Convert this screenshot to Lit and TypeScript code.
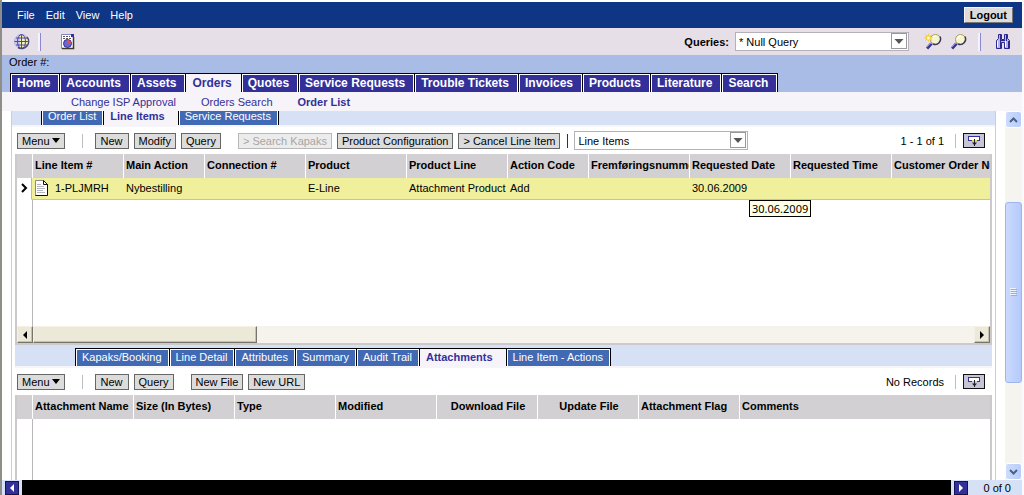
import { LitElement, html, css, svg, nothing } from "lit";
import { customElement, property } from "lit/decorators.js";
import { classMap } from "lit/directives/class-map.js";
import { styleMap } from "lit/directives/style-map.js";

interface Column {
  label: string;
  width?: number;
  center?: boolean;
}

const base = css`
  * {
    box-sizing: border-box;
  }
  button,
  select {
    font: inherit;
    color: inherit;
    margin: 0;
  }
  svg {
    display: block;
    flex: none;
  }
`;

@customElement("tab-strip")
class TabStrip extends LitElement {
  @property({ attribute: false }) tabs: string[] = [];
  @property() active = "";
  @property({ reflect: true }) size = "small";

  static styles = [
    base,
    css`
      :host {
        display: flex;
        align-items: flex-end;
      }
      .strip {
        display: flex;
        flex: none;
        border-right: 1px solid #000;
      }
      .tab {
        display: block;
        height: 18px;
        padding: 0 7px 0 6px;
        border-top: 1px solid #000;
        border-left: 1px solid #000;
        box-shadow: inset 1px 1px #fff, inset -1px 0 #fff;
        background: #4169b4;
        color: #fff;
        line-height: 17px;
        text-decoration: none;
        white-space: nowrap;
      }
      .active {
        padding-right: 13px;
        background: #f6f3f9;
        color: #33309a;
        font-weight: bold;
        box-shadow: none;
      }
      :host([size="large"]) .tab {
        height: 19px;
        padding-right: 9px;
        background: #33309a;
        font-size: 12px;
        font-weight: bold;
        line-height: 19px;
      }
      :host([size="large"]) .active {
        background: #f6f3f9;
      }
    `,
  ];

  render() {
    return html`<nav class="strip">
      ${this.tabs.map(
        (t) => html`<a href="#" class=${classMap({ tab: true, active: t === this.active })}>${t}</a>`
      )}
    </nav>`;
  }
}

@customElement("combo-box")
class ComboBox extends LitElement {
  @property() value = "";
  @property() label = "";
  @property({ type: Boolean }) caption = false;

  static styles = [
    base,
    css`
      :host {
        display: block;
      }
      .label {
        display: flex;
        align-items: center;
        gap: 6px;
        font-weight: bold;
      }
      .field {
        display: grid;
        width: 174px;
        height: 19px;
        border: 1px solid #b4b2b8;
        background: #fff;
        font-weight: normal;
      }
      .field > * {
        grid-area: 1 / 1;
      }
      .select {
        appearance: none;
        width: 100%;
        border: 0;
        padding: 0 20px 0 3px;
        background: none;
        outline-offset: -1px;
      }
      .arrow {
        justify-self: end;
        pointer-events: none;
      }
    `,
  ];

  render() {
    return html`<label class="label">
      ${this.caption ? html`<span>${this.label}</span>` : nothing}
      <span class="field">
        <select class="select" aria-label=${this.label}>
          <option>${this.value}</option>
        </select>
        <svg class="arrow" width="17" height="17" viewBox="0 0 17 17">
          <rect x=".5" y=".5" width="15" height="15" fill="#fff" stroke="#9a989c" />
          <path d="M3.500 6h9l-4.500 5z" fill="#555" />
        </svg>
      </span>
    </label>`;
  }
}

@customElement("applet-toolbar")
class AppletToolbar extends LitElement {
  @property({ attribute: false }) groups: string[][] = [];
  @property({ attribute: false }) disabled: string[] = [];
  @property() view = "";
  @property() status = "";

  static styles = [
    base,
    css`
      :host {
        display: flex;
        align-items: center;
        height: 27px;
        padding: 0 7px 0 2px;
      }
      .group {
        display: flex;
        gap: 5px;
        margin-right: 17px;
      }
      .button {
        display: flex;
        align-items: center;
        justify-content: center;
        gap: 2px;
        min-width: 34px;
        height: 16px;
        padding: 0 4px;
        border: 1px solid #666;
        background: #dcdcdc;
        line-height: 14px;
        white-space: nowrap;
      }
      .button:disabled {
        border-color: #b8b8b8;
        background: #ececec;
        color: #a6a6a6;
      }
      .rule {
        width: 1px;
        height: 14px;
        background: #bdbdc4;
      }
      .menu-rule {
        margin: 0 12px 0 17px;
      }
      .view-rule {
        background: #2b2870;
        margin-right: 6px;
        margin-left: -10px;
      }
      .status {
        margin-left: auto;
        white-space: nowrap;
      }
      .status-rule {
        margin: 0 7px 0 11px;
      }
      .toggle {
        padding: 0;
        border: 0;
        background: none;
      }
    `,
  ];

  render() {
    return html`
      <button class="button">
        Menu
        <svg width="8" height="5" viewBox="0 0 8 5"><path d="M0 0h8L4 5z" /></svg>
      </button>
      <span class="rule menu-rule"></span>
      ${this.groups.map(
        (g) => html`<div class="group">
          ${g.map(
            (b) => html`<button class="button" ?disabled=${this.disabled.includes(b)}>${b}</button>`
          )}
        </div>`
      )}
      ${this.view
        ? html`<span class="rule view-rule"></span>
            <combo-box label="View" value=${this.view}></combo-box>`
        : nothing}
      <span class="status">${this.status}</span>
      <span class="rule status-rule"></span>
      <button class="toggle" aria-label="Show more">
        <svg width="22" height="15" viewBox="0 0 22 15">
          <rect x=".5" y=".5" width="21" height="14" fill="#c6c5d8" stroke="#111" />
          <rect x="5.500" y="3.500" width="11" height="4" fill="#fff" stroke="#33309a" />
          <path d="M9 7.500h5" stroke="#e8d860" />
          <path d="M11.500 6v7" stroke="#222" />
          <path d="M9 9.500h5l-2.500 3z" fill="#222" />
        </svg>
      </button>
    `;
  }
}

@customElement("record-list")
class RecordList extends LitElement {
  @property({ attribute: false }) columns: Column[] = [];
  @property({ attribute: false }) rows: string[][] = [];
  @property({ type: Boolean }) scroller = false;

  static styles = [
    base,
    css`
      :host {
        display: flex;
        flex-direction: column;
        border: solid #cbc9cc;
        border-width: 0 2px 0 2px;
        background: linear-gradient(#b9b7ba, #b9b7ba) 15px 0 / 1px 100% no-repeat #fff;
      }
      :host([scroller]) {
        border-bottom-width: 2px;
      }
      .table {
        width: 100%;
        table-layout: fixed;
        border-collapse: separate;
        border-spacing: 0;
      }
      .head,
      .cell {
        overflow: hidden;
        white-space: nowrap;
        text-align: left;
      }
      .head {
        height: 24px;
        padding: 0 0 2px 2px;
        border-left: 1px solid #fff;
        background: #d2d0d2;
        font-weight: bold;
      }
      .head:first-child {
        border-left: 0;
      }
      .center {
        text-align: center;
      }
      .cell {
        height: 22px;
        padding: 0 0 2px 3px;
        border-bottom: 1px solid #c4c2a8;
        background: #efef9c;
      }
      .marker {
        background: #fff;
        border-bottom-color: #fff;
        border-right: 1px solid #b9b7ba;
      }
      .link {
        display: flex;
        align-items: center;
        gap: 7px;
      }
      .space {
        flex: 1;
      }
      .scrollbar {
        display: flex;
        height: 17px;
        background: #f5f3ec;
      }
      .step,
      .thumb {
        border: 1px solid;
        border-color: #f4f1e4 #77746a #77746a #f4f1e4;
        background: #ece9d8;
        box-shadow: inset -1px -1px #c4c1b0;
      }
      .step {
        display: grid;
        place-content: center;
        width: 16px;
        padding: 0;
      }
      .thumb {
        width: 23%;
      }
      .end {
        margin-left: auto;
      }
    `,
  ];

  render() {
    return html`
      <table class="table">
        <colgroup>
          <col style=${styleMap({ width: "15px" })} />
          ${this.columns.map(
            (c) => html`<col style=${styleMap(c.width ? { width: `${c.width}px` } : {})} />`
          )}
        </colgroup>
        <thead>
          <tr>
            <th class="head"></th>
            ${this.columns.map(
              (c) => html`<th class=${classMap({ head: true, center: !!c.center })}>${c.label}</th>`
            )}
          </tr>
        </thead>
        <tbody>
          ${this.rows.map(
            (r) => html`<tr>
              <td class="cell marker">
                <svg width="9" height="10" viewBox="0 0 9 10">
                  <path d="M2 1l4 4-4 4" fill="none" stroke="#000" stroke-width="2" />
                </svg>
              </td>
              ${r.map((v, i) =>
                i === 0
                  ? html`<td class="cell">
                      <span class="link">
                        <svg width="13" height="16" viewBox="0 0 13 16">
                          <path d="M.5.5h8l4 4v11H.5z" fill="#fff" stroke="#888" />
                          <path d="M12.500 4.500v11H.5M8.500.5v4h4z" fill="none" stroke="#111" />
                          <path d="M2 4.500h4M2 6.500h7M2 8.500h8M2 10.500h6M2 12.500h8" stroke="#b5b5c0" />
                        </svg>
                        ${v}
                      </span>
                    </td>`
                  : html`<td class="cell">${v}</td>`
              )}
            </tr>`
          )}
        </tbody>
      </table>
      <div class="space"></div>
      ${this.scroller
        ? html`<div class="scrollbar">
            <button class="step" aria-label="Scroll left">
              <svg width="4" height="8" viewBox="0 0 4 8"><path d="M4 0v8L0 4z" /></svg>
            </button>
            <div class="thumb"></div>
            <button class="step end" aria-label="Scroll right">
              <svg width="4" height="8" viewBox="0 0 4 8"><path d="M0 0v8l4-4z" /></svg>
            </button>
          </div>`
        : nothing}
    `;
  }
}

const lens = svg`
  <path d="M6.500 10.500L2 15.500" stroke="#37348f" stroke-width="3" />
  <path d="M6 10L1.500 14.500" stroke="#8f8de0" />
  <circle cx="10.500" cy="6.500" r="5" fill="#f6f4cc" stroke="#a8a05c" />
  <path d="M15 3.500a5.500 5.500 0 0 1-7 7.500" fill="none" stroke="#3a3a58" stroke-width="1.500" />
  <path d="M7.500 6a3.500 3.500 0 0 1 3-3" fill="none" stroke="#fff" stroke-width="1.500" />`;

@customElement("app-root")
class AppRoot extends LitElement {
  static styles = [
    base,
    css`
      :host {
        display: flex;
        flex-direction: column;
        min-height: 100vh;
        box-sizing: border-box;
        padding-top: 2px;
        border-left: 2px solid #8f8d88;
        border-right: 2px solid #fbfaff;
        background: #fff;
        color: #000;
        font-family: "Liberation Sans", Arial, sans-serif;
        font-size: 11px;
        line-height: 14px;
      }
      .menubar {
        display: flex;
        align-items: center;
        gap: 1px;
        height: 26px;
        padding: 0 9px 0 10px;
        background: #0f3585;
      }
      .menu {
        padding: 0 5px;
        border: 0;
        background: none;
        color: #fff;
        height: 26px;
      }
      .logout {
        margin-left: auto;
        height: 16px;
        padding: 0 5px;
        border: 1px solid #f6f6f6;
        border-right-color: #777;
        border-bottom-color: #777;
        background: #dcdcdc;
        color: #000;
        font-weight: bold;
        line-height: 14px;
      }
      .toolbar {
        display: flex;
        align-items: center;
        height: 27px;
        padding: 0 11px 0 11px;
        background: #e6dfe8;
      }
      .icon {
        padding: 0;
        border: 0;
        background: none;
      }
      .bar {
        width: 3px;
        height: 18px;
        border: solid #8a88d0;
        border-width: 0 1px 0 0;
        background: #f6f4fb;
      }
      .bar-left {
        margin: 0 20px 0 8px;
      }
      .queries {
        margin: 0 14px 0 auto;
      }
      .find {
        margin-left: 8px;
      }
      .bar-right {
        margin: 0 14px 0 10px;
      }
      .context {
        padding: 0 7px;
        background: #a9bce6;
      }
      .order {
        height: 18px;
      }
      .screens {
        margin-left: 1px;
      }
      .views {
        display: flex;
        gap: 25px;
        align-items: center;
        height: 19px;
        padding-left: 69px;
        background: #f6f3f9;
      }
      .view {
        color: #33309a;
        text-decoration: none;
      }
      .current {
        font-weight: bold;
      }
      .frame {
        display: flex;
        flex: 1;
      }
      .content {
        flex: 1;
        min-width: 0;
        display: flex;
        flex-direction: column;
        margin: 0 9px;
        border: solid #d0ced2;
        border-width: 0 1px;
      }
      .subtabs {
        height: 14px;
        overflow: hidden;
        padding-left: 29px;
        background: #d6e1f5;
      }
      .edge {
        height: 2px;
        background: #f6f5fb;
      }
      .applet {
        display: flex;
        flex-direction: column;
        margin: 0 3px 0 3px;
      }
      .first-list {
        height: 191px;
      }
      .grow,
      .grow-list {
        flex: 1;
      }
      .detail-tabs {
        height: 21px;
        padding-left: 60px;
        background: #d6e1f5;
      }
      .tip {
        position: absolute;
        top: 46px;
        left: 734px;
        padding: 0 2px;
        border: 1px solid #000;
        background: #ffffe6;
        font-family: "Noto Sans", sans-serif;
        line-height: 15px;
      }
      .holder {
        position: relative;
      }
      .vscroll {
        display: flex;
        flex-direction: column;
        width: 17px;
        background: #f6f4ee;
      }
      .arrow {
        display: grid;
        place-content: center;
        height: 17px;
        padding: 0;
        border: 1px solid #fff;
        border-radius: 3px;
        background: linear-gradient(90deg, #cddcfd, #b9cdfa);
      }
      .track {
        flex: 1;
        display: grid;
        grid-template-rows: 22fr 54fr 24fr;
      }
      .grip {
        grid-row: 2;
        display: grid;
        place-content: center;
        border: 1px solid #9db7ee;
        border-radius: 3px;
        background: linear-gradient(90deg, #cbdafd, #b5cafb);
      }
      .footer {
        display: flex;
        align-items: center;
        height: 15px;
        background: #d6e1f5;
      }
      .page {
        display: grid;
        place-content: center;
        width: 14px;
        height: 14px;
        margin: 0 3px;
        padding: 0;
        border: 1px solid #15134f;
        background: #33309a;
      }
      .black {
        flex: 1;
        height: 15px;
        background: #000;
      }
      .count {
        padding: 0 11px 0 12px;
      }
    `,
  ];

  private lineColumns: Column[] = [
    { label: "Line Item #", width: 91 },
    { label: "Main Action", width: 81 },
    { label: "Connection #", width: 101 },
    { label: "Product", width: 101 },
    { label: "Product Line", width: 101 },
    { label: "Action Code", width: 81 },
    { label: "Fremføringsnummer", width: 101 },
    { label: "Requested Date", width: 101 },
    { label: "Requested Time", width: 101 },
    { label: "Customer Order Number" },
  ];

  private fileColumns: Column[] = [
    { label: "Attachment Name", width: 101 },
    { label: "Size (In Bytes)", width: 101 },
    { label: "Type", width: 101 },
    { label: "Modified", width: 101 },
    { label: "Download File", width: 101, center: true },
    { label: "Update File", width: 101, center: true },
    { label: "Attachment Flag", width: 101 },
    { label: "Comments" },
  ];

  render() {
    return html`
      <header>
        <div class="menubar">
          ${["File", "Edit", "View", "Help"].map((m) => html`<button class="menu">${m}</button>`)}
          <button class="logout">Logout</button>
        </div>
        <div class="toolbar">
          <button class="icon" aria-label="Site map">
            <svg width="17" height="17" viewBox="0 0 17 17">
              <circle cx="8.500" cy="8.500" r="7" fill="#f3f0b8" stroke="#a9a7d8" />
              <path d="M4 3.500L2 7v3l2 4h3V3z" fill="#c9c8f0" />
              <path d="M8.500 1.500v14M1.500 8.500h14M3 5h11M3 12h11" stroke="#4a47a8" fill="none" />
              <ellipse cx="8.500" cy="8.500" rx="4" ry="7" fill="none" stroke="#4a47a8" />
              <path d="M14 4a7 7 0 0 1-9 10.500" stroke="#4a4870" stroke-width="1.500" fill="none" />
            </svg>
          </button>
          <span class="bar bar-left"></span>
          <button class="icon" aria-label="Reports">
            <svg width="14" height="17" viewBox="0 0 14 17">
              <path d="M.5 1.500h12v14H.5z" fill="#fff" stroke="#8583c4" />
              <path d="M12.500 4v11.500H1" stroke="#3d3a28" stroke-width="1.500" fill="none" />
              <path d="M10 1v3h3V1z" fill="#33309a" />
              <path d="M2 3.500h7M2 5.500h9" stroke="#555" stroke-dasharray="2 1" />
              <circle cx="6.500" cy="10.500" r="4" fill="#6a68d0" stroke="#33309a" />
              <path d="M6.500 10.500V7A3.500 3.500 0 0 1 10 10.500z" fill="#e0505c" />
            </svg>
          </button>
          <combo-box class="queries" label="Queries:" caption value="* Null Query"></combo-box>
          <button class="icon" aria-label="New query">
            <svg width="19" height="17" viewBox="-2 0 19 17">
              ${lens}
              <path
                d="M3.500 0l1 3L7 1 6 4l3 1-3 .5L7.500 8 4.500 6.500l-1 3-1-3L0 8l1-2.500L-2 5l3-1-1-3 2.500 2z"
                fill="#f6cf3a"
              />
              <circle cx="3.500" cy="5" r="1.500" fill="#fffbd0" />
            </svg>
          </button>
          <button class="icon find" aria-label="Execute query">
            <svg width="18" height="17" viewBox="0 0 18 17">${lens}</svg>
          </button>
          <span class="bar bar-right"></span>
          <button class="icon" aria-label="Search center">
            <svg width="16" height="17" viewBox="0 0 16 17">
              <path
                d="M3.500 1.500h3v5h3v-5h3v4l2 2v8h-5v-6h-3v6h-5v-8l2-2z"
                fill="#b4b2f0"
                stroke="#2b288e"
              />
              <path d="M5.500 2v13M13.500 8v7M11.500 2v6M6 7.500h4" stroke="#2b288e" />
              <path d="M2.500 8v6M10.500 8v6" stroke="#fff" />
            </svg>
          </button>
        </div>
        <div class="context">
          <div class="order">Order #:</div>
          <tab-strip
            class="screens"
            size="large"
            active="Orders"
            .tabs=${[
              "Home",
              "Accounts",
              "Assets",
              "Orders",
              "Quotes",
              "Service Requests",
              "Trouble Tickets",
              "Invoices",
              "Products",
              "Literature",
              "Search",
            ]}
          ></tab-strip>
        </div>
        <nav class="views">
          <a class="view" href="#">Change ISP Approval</a>
          <a class="view" href="#">Orders Search</a>
          <a class="view current" href="#">Order List</a>
        </nav>
      </header>

      <div class="frame">
        <main class="content">
          <tab-strip
            class="subtabs"
            active="Line Items"
            .tabs=${["Order List", "Line Items", "Service Requests"]}
          ></tab-strip>
          <div class="edge"></div>
          <section class="applet">
            <applet-toolbar
              .groups=${[
                ["New", "Modify", "Query"],
                ["> Search Kapaks", "Product Configuration", "> Cancel Line Item"],
              ]}
              .disabled=${["> Search Kapaks"]}
              view="Line Items"
              status="1 - 1 of 1"
            ></applet-toolbar>
            <div class="holder">
              <record-list
                class="first-list"
                scroller
                .columns=${this.lineColumns}
                .rows=${[
                  ["1-PLJMRH", "Nybestilling", "", "E-Line", "Attachment Product", "Add", "", "30.06.2009", "", ""],
                ]}
              ></record-list>
              <div class="tip" role="tooltip">30.06.2009</div>
            </div>
          </section>
          <section class="applet grow">
            <tab-strip
              class="detail-tabs"
              active="Attachments"
              .tabs=${[
                "Kapaks/Booking",
                "Line Detail",
                "Attributes",
                "Summary",
                "Audit Trail",
                "Attachments",
                "Line Item - Actions",
              ]}
            ></tab-strip>
            <div class="edge"></div>
            <applet-toolbar
              .groups=${[
                ["New", "Query"],
                ["New File", "New URL"],
              ]}
              status="No Records"
            ></applet-toolbar>
            <record-list class="grow-list" .columns=${this.fileColumns}></record-list>
          </section>
        </main>
        <div class="vscroll">
          <button class="arrow" aria-label="Scroll up">
            <svg width="9" height="6" viewBox="0 0 9 6">
              <path d="M1 5l3.500-3.500L8 5" fill="none" stroke="#4d6185" stroke-width="2" />
            </svg>
          </button>
          <div class="track">
            <div class="grip">
              <svg width="7" height="8" viewBox="0 0 7 8">
                <path d="M0 .5h6M0 2.500h6M0 4.500h6M0 6.500h6" stroke="#eef4fe" />
                <path d="M1 1.500h6M1 3.500h6M1 5.500h6M1 7.500h6" stroke="#8cb0f8" />
              </svg>
            </div>
          </div>
          <button class="arrow" aria-label="Scroll down">
            <svg width="9" height="6" viewBox="0 0 9 6">
              <path d="M1 1l3.500 3.500L8 1" fill="none" stroke="#4d6185" stroke-width="2" />
            </svg>
          </button>
        </div>
      </div>

      <footer class="footer">
        <button class="page" aria-label="Previous">
          <svg width="4" height="8" viewBox="0 0 4 8"><path d="M4 0v8L0 4z" fill="#fff" /></svg>
        </button>
        <div class="black"></div>
        <button class="page" aria-label="Next">
          <svg width="4" height="8" viewBox="0 0 4 8"><path d="M0 0v8l4-4z" fill="#fff" /></svg>
        </button>
        <span class="count">0 of 0</span>
      </footer>
    `;
  }
}
